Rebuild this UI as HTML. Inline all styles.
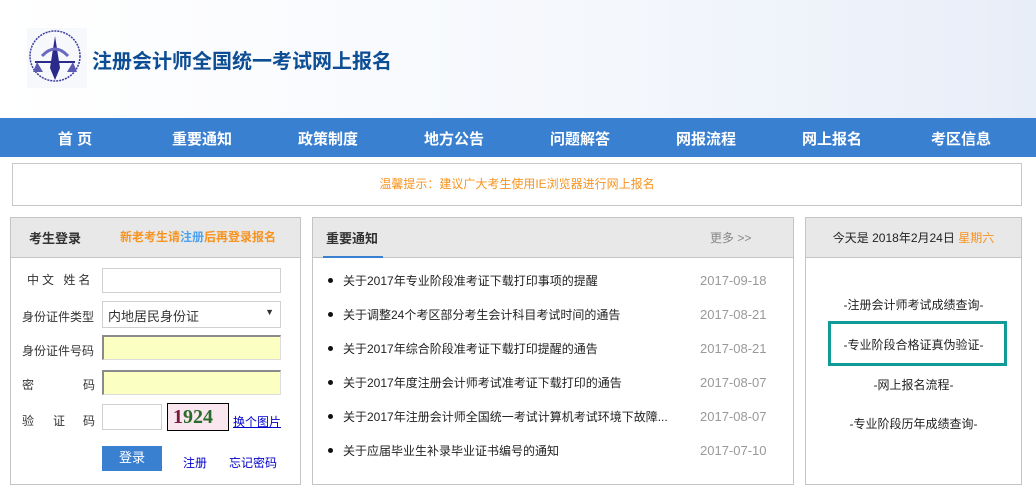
<!DOCTYPE html>
<html><head><meta charset="utf-8"><style>
*{margin:0;padding:0;box-sizing:border-box}
body{width:1036px;height:493px;overflow:hidden;background:#fff;font-family:"Liberation Sans","Noto Sans CJK SC",sans-serif;font-size:12px;color:#333;position:relative}
.hd{position:absolute;left:0;top:0;width:1036px;height:118px;background:linear-gradient(90deg,#fff 0%,#f4f7fc 60%,#e8eef8 100%)}
.logo{position:absolute;left:27px;top:28px;width:60px;height:60px}
.title{position:absolute;left:92px;top:45px;font-size:20px;font-weight:bold;color:#0d4d94}
.nav{position:absolute;left:0;top:118px;width:1036px;height:39px;background:#3a80d1}
.nav span{position:absolute;top:10px;color:#fff;font-size:15px;font-weight:bold;transform:translateX(-50%);white-space:nowrap}
.tip{position:absolute;left:12px;top:163px;width:1010px;height:43px;border:1px solid #c8c8c8;text-align:center;line-height:40px;color:#f7931e;font-size:12px}
.pn{position:absolute;top:217px;height:268px;border:1px solid #c4c4c4}
.ph{height:40px;background:#e8e8e8;border-bottom:1px solid #c4c4c4;position:relative}
.l label{position:absolute;font-size:12px;color:#333}
.in{position:absolute;left:91px;width:179px;height:25px;border:1px solid #d0d0d0;background:#fff}
.y{background:#fcffc2;border-color:#8a8a8a #ddd #ddd #8a8a8a;border-width:2px 1px 1px 2px}
.news li{list-style:none;position:absolute;left:15px;width:455px;height:18px;font-size:12px;color:#222}
.news li:before{content:"";position:absolute;left:0;top:5px;width:5px;height:5px;border-radius:50%;background:#111}
.news li b{font-weight:normal;position:absolute;left:15px;top:-1px;white-space:nowrap}
.news li i{font-style:normal;position:absolute;left:372px;top:0;color:#999;font-size:13px}
.r p{position:absolute;left:0;width:100%;text-align:center;font-size:12px;color:#222}
</style></head><body>
<div class="hd">
<svg class="logo" viewBox="0 0 60 60"><rect width="60" height="60" fill="#f7f8fc"/><circle cx="28" cy="28" r="25" fill="none" stroke="#3c3c9c" stroke-width="1.5" stroke-dasharray="2 1"/><path d="M28 8 L33 40 L28 52 L23 40Z" fill="#2a2a8a"/><path d="M8 34 L48 34" stroke="#2a2a8a" stroke-width="2"/><path d="M10 34 L6 44 L16 44Z M46 34 L40 44 L50 44Z" fill="#5a5ab0"/><path d="M15 28 Q28 14 41 28" fill="none" stroke="#6a6ac0" stroke-width="3"/></svg>
<div class="title">注册会计师全国统一考试网上报名</div>
</div>
<div class="nav"><span style="left:75px">首 页</span><span style="left:202px">重要通知</span><span style="left:328px">政策制度</span><span style="left:454px">地方公告</span><span style="left:580px">问题解答</span><span style="left:706px">网报流程</span><span style="left:832px">网上报名</span><span style="left:961px">考区信息</span></div>
<div class="tip">温馨提示：建议广大考生使用IE浏览器进行网上报名</div>

<div class="pn l" style="left:10px;width:291px">
<div class="ph"><span style="position:absolute;left:18px;top:10px;font-size:13px;font-weight:bold;color:#333">考生登录</span><span style="position:absolute;left:109px;top:10px;font-size:12px;font-weight:bold;color:#f7931e">新老考生请<span style="color:#4da3f0">注册</span>后再登录报名</span></div>
<label style="top:53px;left:16px;letter-spacing:3px">中文 姓名</label><div class="in" style="top:50px"></div>
<label style="top:90px;left:11px">身份证件类型</label><div class="in" style="top:83px;height:27px;padding:4px 5px;font-size:13px">内地居民身份证<span style="position:absolute;right:6px;top:5px;font-size:9px">▼</span></div>
<label style="top:124px;left:11px">身份证件号码</label><div class="in y" style="top:117px"></div>
<label style="top:158px;left:11px">密</label><label style="top:158px;left:72px">码</label><div class="in y" style="top:152px"></div>
<label style="top:194px;left:11px">验</label><label style="top:194px;left:42px">证</label><label style="top:194px;left:72px">码</label><div class="in" style="top:186px;width:60px;height:26px"></div>
<div style="position:absolute;left:156px;top:185px;width:62px;height:28px;border:1px solid #000;background:#f9e6ee;font:bold 20px 'Liberation Serif',serif;color:#7a1a3a;padding-left:5px;line-height:26px">1<span style="color:#2a6a2a">924</span></div>
<span style="position:absolute;left:222px;top:195px;color:#00c;text-decoration:underline;font-size:12px">换个图片</span>
<div style="position:absolute;left:91px;top:228px;width:60px;height:25px;background:#3a80d1;color:#fff;text-align:center;line-height:24px;font-size:13px">登录</div>
<span style="position:absolute;left:172px;top:236px;color:#00c">注册</span><span style="position:absolute;left:218px;top:236px;color:#00c">忘记密码</span>
</div>

<div class="pn news" style="left:312px;width:482px">
<div class="ph"><span style="position:absolute;left:13px;top:10px;font-size:13px;font-weight:bold;color:#333">重要通知</span><div style="position:absolute;left:10px;bottom:-1px;width:60px;height:2px;background:#3a80d1"></div><span style="position:absolute;left:397px;top:11px;color:#888">更多 &gt;&gt;</span></div>
<ul>
<li style="top:55px"><b>关于2017年专业阶段准考证下载打印事项的提醒</b><i>2017-09-18</i></li>
<li style="top:89px"><b>关于调整24个考区部分考生会计科目考试时间的通告</b><i>2017-08-21</i></li>
<li style="top:123px"><b>关于2017年综合阶段准考证下载打印提醒的通告</b><i>2017-08-21</i></li>
<li style="top:157px"><b>关于2017年度注册会计师考试准考证下载打印的通告</b><i>2017-08-07</i></li>
<li style="top:191px"><b>关于2017年注册会计师全国统一考试计算机考试环境下故障...</b><i>2017-08-07</i></li>
<li style="top:225px"><b>关于应届毕业生补录毕业证书编号的通知</b><i>2017-07-10</i></li>
</ul></div>

<div class="pn r" style="left:805px;width:217px">
<div class="ph"><p style="top:11px">今天是 2018年2月24日 <span style="color:#f7931e">星期六</span></p></div>
<p style="top:78px">-注册会计师考试成绩查询-</p>
<div style="position:absolute;left:22px;top:103px;width:179px;height:45px;border:3px solid #109a98"></div>
<p style="top:118px">-专业阶段合格证真伪验证-</p>
<p style="top:158px">-网上报名流程-</p>
<p style="top:197px">-专业阶段历年成绩查询-</p>
</div>
</body></html>
